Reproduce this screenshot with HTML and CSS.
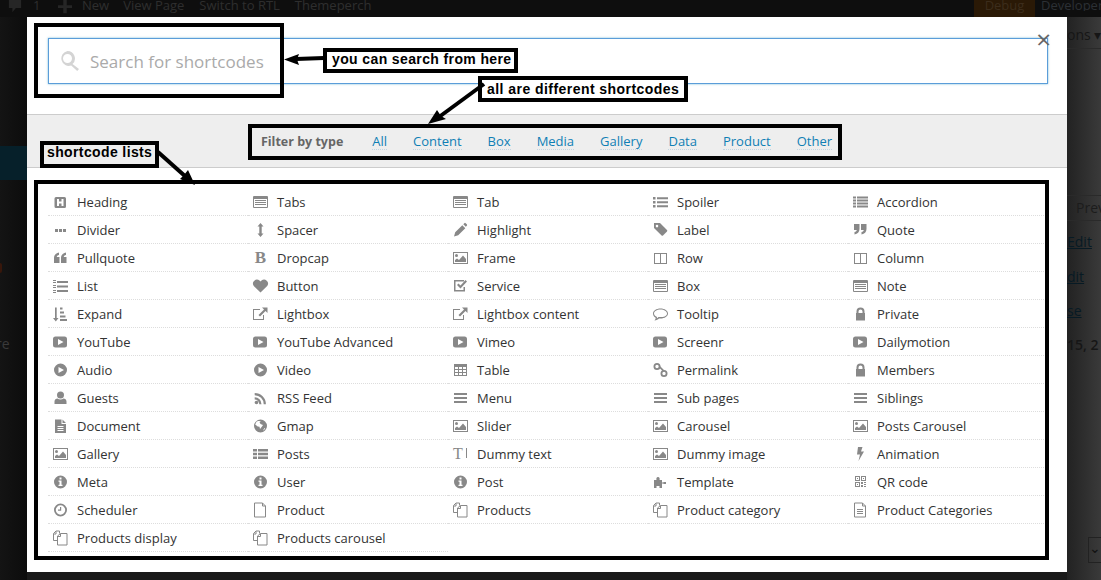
FILE: index.html
```html
<!DOCTYPE html>
<html lang="en">
<head>
<meta charset="utf-8">
<title>Shortcodes</title>
<link rel="stylesheet" href="styles.css">
</head>
<body>
<svg class="defs" width="0" height="0" aria-hidden="true">
  <symbol id="i-heading" viewBox="0 0 15 15"><path fill-rule="evenodd" d="M3 3h8.500A1.500 1.500 0 0113 4.500v8a1.500 1.500 0 01-1.500 1.500H3a1.500 1.500 0 01-1.500-1.500v-8A1.500 1.500 0 013 3zM4 5v7h2V9.500h2.500V12h2V5h-2v2.500H6V5z"/></symbol>
  <symbol id="i-listalt" viewBox="0 0 15 15"><path fill-rule="evenodd" d="M1 2h13a1 1 0 011 1v10a1 1 0 01-1 1H1a1 1 0 01-1-1V3a1 1 0 011-1zM1 5v8h13V5z"/><path d="M2 6h11v1H2zM2 8h11v1H2zM2 10h11v1H2z"/></symbol>
  <symbol id="i-listul" viewBox="0 0 15 15"><path d="M0 3h2.500v2.500H0zM0 7h2.500v2.500H0zM0 11h2.500v2.500H0zM4 3.300h11v2H4zM4 7.300h11v2H4zM4 11.300h11v2H4z"/></symbol>
  <symbol id="i-lines" viewBox="0 0 15 15"><path d="M0 2.500h3v2H0zM0 5.500h3v2H0zM0 8.500h3v2H0zM0 11.500h3v2H0zM4 2.500h11v2H4zM4 5.500h11v2H4zM4 8.500h11v2H4zM4 11.500h11v2H4z"/></symbol>
  <symbol id="i-dots" viewBox="0 0 15 15"><path d="M2 7h3v3H2zM6 7h3v3H6zM10 7h3v3h-3z"/></symbol>
  <symbol id="i-arrowsv" viewBox="0 0 15 15"><path d="M7.500 1l3 3.500H8.700v7h1.800l-3 3.500-3-3.500h1.800v-7H4.500z"/></symbol>
  <symbol id="i-pencil" viewBox="0 0 15 15"><path d="M1 14.500l1.200-4.200 7.100-7.100 3 3-7.100 7.100zM10.300 2.200l1-1a1 1 0 011.400 0l1.100 1.100a1 1 0 010 1.400l-1 1z"/></symbol>
  <symbol id="i-tag" viewBox="0 0 15 15"><path fill-rule="evenodd" d="M1 1h6l7 7a1 1 0 010 1.400L10 13.500a1 1 0 01-1.400 0L1 6zM4 2.800a1.300 1.300 0 100 2.600 1.300 1.300 0 000-2.600z"/></symbol>
  <symbol id="i-quoteleft" viewBox="0 0 15 15"><path d="M1 8c0-3 2-5 5-5.500V5C4.500 5.300 3.800 6 3.800 7h2.700v6H1zM8 8c0-3 2-5 5-5.500V5c-1.500.3-2.200 1-2.200 2h2.700v6H8z"/></symbol>
  <symbol id="i-quoteright" viewBox="0 0 15 15"><path d="M6.500 7c0 3-2 5-5 5.500V10c1.500-.3 2.200-1 2.200-2H1V2h5.500zM13.500 7c0 3-2 5-5 5.500V10c1.500-.3 2.200-1 2.200-2H8V2h5.500z"/></symbol>
  <symbol id="i-picture" viewBox="0 0 15 15"><path fill-rule="evenodd" d="M0 2h15v12H0zM1 3v10h13V3z"/><circle cx="3.500" cy="5.500" r="1.500"/><path d="M2 12v-2l2-1.500L6 10l4-4.500 3 3.500v3z"/></symbol>
  <symbol id="i-columns" viewBox="0 0 15 15"><path fill-rule="evenodd" d="M1 3h13v11H1zM2 4v9h5V4zM8 4v9h5V4z"/></symbol>
  <symbol id="i-listol" viewBox="0 0 15 15"><path d="M0 2h3v1H0zM0 4h3v1H0zM0 7h3v1H0zM0 9h3v1H0zM0 12h3v1H0zM0 14h3v1H0zM4 3h11v2H4zM4 7.500h11v2H4zM4 12h11v2H4z"/></symbol>
  <symbol id="i-heart" viewBox="0 0 15 15"><path d="M7.500 14.500L.8 8A4 4 0 016.500 2.500l1 1 1-1A4 4 0 0114.200 8z"/></symbol>
  <symbol id="i-check" viewBox="0 0 15 15"><path fill-rule="evenodd" d="M1 2h10v1.500H2.500V12h8V9H12v4.500H1z"/><path d="M5.500 5.500l2 2 5-5.500 1.500 1.500-6.500 7L4 7z"/></symbol>
  <symbol id="i-sort" viewBox="0 0 15 15"><path d="M2 1.500h1.700V12H5.500l-2.700 3.500L0 12h2zM7 1.500h2.500v2H7zM7 5.500h4v2H7zM7 9.500h5.500v2H7zM7 13h7v2H7z"/></symbol>
  <symbol id="i-external" viewBox="0 0 15 15"><path fill-rule="evenodd" d="M0 3h7v1H1v9h9V9h1v5H0z"/><path d="M9 1.500h5.500V7l-2-2L7 10.500 5.500 9 11 3.500z"/></symbol>
  <symbol id="i-comment" viewBox="0 0 15 15"><path fill-rule="evenodd" d="M7.500 2.500c4.100 0 7.500 2.200 7.500 5s-3.400 5-7.500 5H6C5 13.500 3.500 14.200 1.500 14.500c.7-.8 1.200-1.500 1.200-2.700C1 10.900 0 9.300 0 7.500c0-2.800 3.400-5 7.500-5zM7.500 3.500C3.900 3.500 1 5.300 1 7.500c0 1.500 1.200 2.800 3 3.500 0 .5-.1 1-.3 1.400.7-.3 1.400-.7 1.800-1.400h2C11.100 11.500 14 9.800 14 7.500s-2.900-4-6.500-4z"/></symbol>
  <symbol id="i-lock" viewBox="0 0 15 15"><path fill-rule="evenodd" d="M3.500 7V5.500a4 4 0 018 0V7h.5v7.500H3V7zM5.500 7h4V5.500a2 2 0 00-4 0z"/></symbol>
  <symbol id="i-youtube" viewBox="0 0 15 15"><path fill-rule="evenodd" d="M2.500 2.500h9A2.500 2.500 0 0114 5v6a2.500 2.500 0 01-2.500 2.500h-9A2.500 2.500 0 010 11V5a2.500 2.500 0 012.500-2.500zM5 5v6l5.500-3z"/></symbol>
  <symbol id="i-playc" viewBox="0 0 15 15"><path fill-rule="evenodd" d="M7.500 1.500a6.500 6.500 0 110 13 6.500 6.500 0 010-13zM5.500 5v6l5.500-3z"/></symbol>
  <symbol id="i-table" viewBox="0 0 15 15"><path fill-rule="evenodd" d="M1 2h13v12H1zM2 5v2h3V5zM6 5v2h3V5zM10 5v2h3V5zM2 8v2h3V8zM6 8v2h3V8zM10 8v2h3V8zM2 11v2h3v-2zM6 11v2h3v-2zM10 11v2h3v-2z"/></symbol>
  <symbol id="i-link" viewBox="0 0 15 15"><path fill-rule="evenodd" d="M4 1a3.500 3.500 0 110 7 3.500 3.500 0 010-7zM4 2.800a1.700 1.700 0 100 3.400 1.700 1.700 0 000-3.400zM11 8a3.500 3.500 0 110 7 3.500 3.500 0 010-7zM11 9.800a1.700 1.700 0 100 3.400 1.700 1.700 0 000-3.400z"/><path d="M6 5.500l1.200-1.200 4 4-1.200 1.200z"/></symbol>
  <symbol id="i-user" viewBox="0 0 15 15"><circle cx="7.500" cy="5" r="3.500"/><path d="M1.500 14v-2.500c0-2 1.500-3 3-3 .8.700 1.800 1 3 1s2.200-.3 3-1c1.500 0 3 1 3 3V14z"/></symbol>
  <symbol id="i-rss" viewBox="0 0 15 15"><circle cx="3.500" cy="12.500" r="1.800"/><path d="M1.700 7.300v2.200a4.700 4.700 0 014.600 4.700h2.200a6.900 6.900 0 00-6.800-6.900zM1.700 3v2.200a9 9 0 019 9h2.200A11.200 11.200 0 001.700 3z"/></symbol>
  <symbol id="i-bars" viewBox="0 0 15 15"><path d="M1 3h13v2H1zM1 7h13v2H1zM1 11h13v2H1z"/></symbol>
  <symbol id="i-filetext" viewBox="0 0 15 15"><path fill-rule="evenodd" d="M2 1.500h6.500V6H13v9H2zM9.500 1.500L13 5H9.500zM4.500 8v1h6V8zM4.500 10v1h6v-1zM4.500 12v1h6v-1z"/></symbol>
  <symbol id="i-globe" viewBox="0 0 15 15"><path fill-rule="evenodd" d="M7.500 1.500a6.500 6.500 0 110 13 6.500 6.500 0 010-13zM3.500 3.800L2.200 6.500l2.500 2 1.800.2.500 2.300 2-2.500L10 7 7.500 6l-1-2L8 3H5zM11.500 10L10 12.500l1-.5 1.200-1.500z"/></symbol>
  <symbol id="i-thlist" viewBox="0 0 15 15"><path d="M0 3h4v2.500H0zM5 3h10v2.500H5zM0 6.800h4v2.500H0zM5 6.800h10v2.500H5zM0 10.600h4v2.500H0zM5 10.600h10v2.500H5z"/></symbol>
  <symbol id="i-bolt" viewBox="0 0 15 15"><path d="M5 1h4.500L8 5.500h3L5.500 15 7 8.500H4z"/></symbol>
  <symbol id="i-info" viewBox="0 0 15 15"><path fill-rule="evenodd" d="M7.500 1.500a6.500 6.500 0 110 13 6.500 6.500 0 010-13zM6.500 3.500v2h2v-2zM5.500 6.500v1.200h1v3.100h-1V12h4v-1.200h-1V6.500z"/></symbol>
  <symbol id="i-puzzle" viewBox="0 0 15 15"><path d="M1 6h2.500C3 4.500 3.500 3 5 3s2 1.500 1.500 3H9v2.500h1.500V8H13v2h-2.500v-.5H9V14H6.500v-2h-3v2H1z"/></symbol>
  <symbol id="i-qr" viewBox="0 0 15 15"><path fill-rule="evenodd" d="M2 2h5v5H2zM3 3v3h3V3zM8 2h5v5H8zM9 3v3h3V3zM2 8h5v5H2zM3 9v3h3V9z"/><path d="M4 4h1v1H4zM10 4h1v1h-1zM4 10h1v1H4zM8 8h2v2H8zM11 8h2v1h-2zM11 10h2v1h-2zM8 11h2v2H8zM11 12h2v1h-2z"/></symbol>
  <symbol id="i-clock" viewBox="0 0 15 15"><path fill-rule="evenodd" d="M7.500 1.500a6.500 6.500 0 110 13 6.500 6.500 0 010-13zM7.500 3.300a4.700 4.700 0 100 9.400 4.700 4.700 0 000-9.400z"/><path d="M7 5h1.200v3.700H5V7.600h2z"/></symbol>
  <symbol id="i-file" viewBox="0 0 15 15"><path fill="none" stroke="currentColor" d="M1.500 1h8l3 3v11h-11zM9.500 1v3h3"/></symbol>
  <symbol id="i-files" viewBox="0 0 15 15"><path fill="none" stroke="currentColor" d="M.5 3.500L3 1h3.500v2.500M.5 3.500V10.500H4.500M.5 4H3V1.300M4.500 6L7.500 3.500h6.500V15H4.500zM4.800 6.500H7.500V3.800"/></symbol>
  <symbol id="i-filetexto" viewBox="0 0 15 15"><path fill="none" stroke="currentColor" d="M1.500 1h8l3 3v11h-11zM9.500 1v3h3M4 7.500h6M4 9.500h6M4 11.500h6"/></symbol>
  <symbol id="i-search" viewBox="0 0 20 20"><path fill-rule="evenodd" d="M7.500 0a7.500 7.500 0 015 13l6.500 5-1.800 2-6-5.500A7.500 7.500 0 117.500 0zM7.500 3a4.500 4.500 0 100 9 4.500 4.500 0 000-9z"/></symbol>
</svg>

<header class="adminbar">
  <svg class="bar-icon" viewBox="0 0 16 16"><path d="M1 0h14v9H9l-4 5V9H1z"/></svg>
  <span class="bar-count">1</span>
  <svg class="bar-icon" viewBox="0 0 16 16"><path d="M6 0h4v6h6v3h-6v6H6V9H0V6h6z"/></svg>
  <span class="bar-item bar-new">New</span>
  <span class="bar-item">View Page</span>
  <span class="bar-item">Switch to RTL</span>
  <span class="bar-item">Themeperch</span>
  <span class="bar-debug">Debug</span>
  <span class="bar-dev">Developer</span>
</header>

<div class="page">
  <aside class="sidebar">
    <div class="side-band"></div>
    <div class="side-dot"></div>
    <div class="side-text">re</div>
  </aside>
  <main class="backdrop">
    <div class="back-top">ons ▾</div>
    <div class="back-prev">Prev</div>
    <a class="back-link">Edit</a>
    <a class="back-link">dit</a>
    <a class="back-link">se</a>
    <div class="back-date">15, 2</div>
    <div class="back-select">⌄</div>
  </main>
</div>

<section class="modal">
  <div class="search-area">
    <div class="search-input">
      <svg class="search-icon"><use href="#i-search"/></svg>
      <span class="search-placeholder">Search for shortcodes</span>
    </div>
    <span class="close">×</span>
  </div>
  <nav class="filter">
    <strong class="filter-label">Filter by type</strong>
    <a class="filter-link">All</a>
    <a class="filter-link">Content</a>
    <a class="filter-link">Box</a>
    <a class="filter-link">Media</a>
    <a class="filter-link">Gallery</a>
    <a class="filter-link">Data</a>
    <a class="filter-link">Product</a>
    <a class="filter-link">Other</a>
  </nav>
  <div class="list">
    <div class="item"><svg class="ico"><use href="#i-heading"/></svg>Heading</div>
    <div class="item"><svg class="ico"><use href="#i-listalt"/></svg>Tabs</div>
    <div class="item"><svg class="ico"><use href="#i-listalt"/></svg>Tab</div>
    <div class="item"><svg class="ico"><use href="#i-listul"/></svg>Spoiler</div>
    <div class="item"><svg class="ico"><use href="#i-lines"/></svg>Accordion</div>
    <div class="item"><svg class="ico"><use href="#i-dots"/></svg>Divider</div>
    <div class="item"><svg class="ico"><use href="#i-arrowsv"/></svg>Spacer</div>
    <div class="item"><svg class="ico"><use href="#i-pencil"/></svg>Highlight</div>
    <div class="item"><svg class="ico"><use href="#i-tag"/></svg>Label</div>
    <div class="item"><svg class="ico"><use href="#i-quoteright"/></svg>Quote</div>
    <div class="item"><svg class="ico"><use href="#i-quoteleft"/></svg>Pullquote</div>
    <div class="item"><span class="ico ico-b">B</span>Dropcap</div>
    <div class="item"><svg class="ico"><use href="#i-picture"/></svg>Frame</div>
    <div class="item"><svg class="ico"><use href="#i-columns"/></svg>Row</div>
    <div class="item"><svg class="ico"><use href="#i-columns"/></svg>Column</div>
    <div class="item"><svg class="ico"><use href="#i-listol"/></svg>List</div>
    <div class="item"><svg class="ico"><use href="#i-heart"/></svg>Button</div>
    <div class="item"><svg class="ico"><use href="#i-check"/></svg>Service</div>
    <div class="item"><svg class="ico"><use href="#i-listalt"/></svg>Box</div>
    <div class="item"><svg class="ico"><use href="#i-listalt"/></svg>Note</div>
    <div class="item"><svg class="ico"><use href="#i-sort"/></svg>Expand</div>
    <div class="item"><svg class="ico"><use href="#i-external"/></svg>Lightbox</div>
    <div class="item"><svg class="ico"><use href="#i-external"/></svg>Lightbox content</div>
    <div class="item"><svg class="ico"><use href="#i-comment"/></svg>Tooltip</div>
    <div class="item"><svg class="ico"><use href="#i-lock"/></svg>Private</div>
    <div class="item"><svg class="ico"><use href="#i-youtube"/></svg>YouTube</div>
    <div class="item"><svg class="ico"><use href="#i-youtube"/></svg>YouTube Advanced</div>
    <div class="item"><svg class="ico"><use href="#i-youtube"/></svg>Vimeo</div>
    <div class="item"><svg class="ico"><use href="#i-youtube"/></svg>Screenr</div>
    <div class="item"><svg class="ico"><use href="#i-youtube"/></svg>Dailymotion</div>
    <div class="item"><svg class="ico"><use href="#i-playc"/></svg>Audio</div>
    <div class="item"><svg class="ico"><use href="#i-playc"/></svg>Video</div>
    <div class="item"><svg class="ico"><use href="#i-table"/></svg>Table</div>
    <div class="item"><svg class="ico"><use href="#i-link"/></svg>Permalink</div>
    <div class="item"><svg class="ico"><use href="#i-lock"/></svg>Members</div>
    <div class="item"><svg class="ico"><use href="#i-user"/></svg>Guests</div>
    <div class="item"><svg class="ico"><use href="#i-rss"/></svg>RSS Feed</div>
    <div class="item"><svg class="ico"><use href="#i-bars"/></svg>Menu</div>
    <div class="item"><svg class="ico"><use href="#i-bars"/></svg>Sub pages</div>
    <div class="item"><svg class="ico"><use href="#i-bars"/></svg>Siblings</div>
    <div class="item"><svg class="ico"><use href="#i-filetext"/></svg>Document</div>
    <div class="item"><svg class="ico"><use href="#i-globe"/></svg>Gmap</div>
    <div class="item"><svg class="ico"><use href="#i-picture"/></svg>Slider</div>
    <div class="item"><svg class="ico"><use href="#i-picture"/></svg>Carousel</div>
    <div class="item"><svg class="ico"><use href="#i-picture"/></svg>Posts Carousel</div>
    <div class="item"><svg class="ico"><use href="#i-picture"/></svg>Gallery</div>
    <div class="item"><svg class="ico"><use href="#i-thlist"/></svg>Posts</div>
    <div class="item"><span class="ico ico-t">T<i class="ico-t-bar"></i></span>Dummy text</div>
    <div class="item"><svg class="ico"><use href="#i-picture"/></svg>Dummy image</div>
    <div class="item"><svg class="ico"><use href="#i-bolt"/></svg>Animation</div>
    <div class="item"><svg class="ico"><use href="#i-info"/></svg>Meta</div>
    <div class="item"><svg class="ico"><use href="#i-info"/></svg>User</div>
    <div class="item"><svg class="ico"><use href="#i-info"/></svg>Post</div>
    <div class="item"><svg class="ico"><use href="#i-puzzle"/></svg>Template</div>
    <div class="item"><svg class="ico"><use href="#i-qr"/></svg>QR code</div>
    <div class="item"><svg class="ico"><use href="#i-clock"/></svg>Scheduler</div>
    <div class="item"><svg class="ico"><use href="#i-file"/></svg>Product</div>
    <div class="item"><svg class="ico"><use href="#i-files"/></svg>Products</div>
    <div class="item"><svg class="ico"><use href="#i-files"/></svg>Product category</div>
    <div class="item"><svg class="ico"><use href="#i-filetexto"/></svg>Product Categories</div>
    <div class="item"><svg class="ico"><use href="#i-files"/></svg>Products display</div>
    <div class="item"><svg class="ico"><use href="#i-files"/></svg>Products carousel</div>
  </div>
</section>

<div class="mark mark-search"></div>
<div class="mark mark-filter"></div>
<div class="mark mark-list"></div>
<div class="note note-search">you can search from here</div>
<div class="note note-filter">all are different shortcodes</div>
<div class="note note-list">shortcode lists</div>
<svg class="arrows" viewBox="0 0 1101 580">
  <path class="arrow-line" d="M324 58L296 59"/>
  <path class="arrow-head" d="M284 59.500L299 54L297 59.500L299 65z"/>
  <path class="arrow-line" d="M484 84L439 117"/>
  <path class="arrow-head" d="M428 124L437 110L441 116L446 119z"/>
  <path class="arrow-line" d="M158 152L186 177"/>
  <path class="arrow-head" d="M195 185L180 179L184 175L188 170z"/>
</svg>
</body>
</html>
```
FILE: styles.css
```css
* { box-sizing: border-box; }
html, body { margin: 0; padding: 0; }
body {
  width: 1101px;
  height: 580px;
  overflow: hidden;
  position: relative;
  background: #1a1a1a;
  font-family: "Open Sans", "Liberation Sans", sans-serif;
}
.defs { position: absolute; }
symbol { overflow: visible; }

.adminbar {
  height: 17px;
  display: flex;
  align-items: flex-start;
  background: #0e0e0e;
  color: #2e2e2e;
  font-size: 13px;
  line-height: 11px;
  padding-left: 8px;
  overflow: hidden;
}
.bar-icon { width: 14px; height: 14px; fill: #262626; flex: none; }
.bar-count { margin-left: 11px; width: 25px; }
.bar-item { margin-left: 15px; white-space: nowrap; }
.bar-new { margin-left: 10px; margin-right: -1px; }
.bar-debug {
  margin-left: auto;
  width: 61px;
  height: 17px;
  text-align: center;
  background: #2a1906;
  color: #3c2d1c;
}
.bar-dev { width: 60px; margin-left: 6px; color: #2c3035; white-space: nowrap; overflow: hidden; }

.page { display: flex; height: 563px; }
.sidebar {
  width: 27px;
  flex: none;
  display: flex;
  flex-direction: column;
  background: linear-gradient(90deg, #141414, #0c0c0c);
}
.side-band { height: 34px; margin-top: 129px; background: #06202a; }
.side-dot { width: 2px; height: 10px; margin-top: 83px; background: #38170b; border-radius: 0 5px 5px 0; }
.side-text { margin-top: 63px; margin-left: -4px; color: #3a3a3a; font-size: 14px; line-height: 16px; }

.backdrop {
  margin-left: auto;
  width: 34px;
  height: 563px;
  flex: none;
  display: flex;
  flex-direction: column;
  overflow: hidden;
  background: linear-gradient(90deg, #222, #3a3a3a);
  color: #111;
  font-size: 14px;
  white-space: nowrap;
}
.back-top {
  height: 32px;
  flex: none;
  padding-top: 8px;
  line-height: 20px;
  color: #161616;
  border-bottom: 1px solid #2a2a2a;
}
.back-prev {
  height: 26px;
  flex: none;
  margin-top: 146px;
  padding-left: 9px;
  line-height: 24px;
  color: #1c1c1c;
  border-bottom: 1px solid #2a2a2a;
  border-top: 1px solid #2a2a2a;
}
.back-link { flex: none; height: 34.500px; line-height: 20px; color: #071a24; text-decoration: underline; padding-top: 11px; }
.back-date { flex: none; height: 20px; line-height: 20px; margin-top: 10px; color: #161616; font-weight: 600; }
.back-select {
  flex: none;
  width: 14px;
  height: 26px;
  margin-top: 182px;
  margin-left: 21px;
  border: 1px solid #222;
  line-height: 20px;
  text-align: center;
  color: #111;
}

.modal {
  position: absolute;
  top: 17px;
  left: 27px;
  width: 1040px;
  height: 555px;
  background: #fff;
  display: flex;
  flex-direction: column;
}
.search-area {
  position: relative;
  height: 97px;
  flex: none;
  padding: 21px 19px 0 21px;
}
.search-input {
  height: 46px;
  display: flex;
  align-items: center;
  border: 1px solid #5b9dd9;
  box-shadow: 0 0 2px rgba(30, 140, 190, .6);
  padding-left: 11px;
}
.search-icon { width: 20px; height: 20px; fill: #d4d4d4; flex: none; }
.search-placeholder { margin-left: 10px; color: #aaa; font-size: 17px; }
.close {
  position: absolute;
  top: 9px;
  right: 16px;
  font-size: 26px;
  line-height: 26px;
  color: #666;
}
.filter {
  height: 54px;
  flex: none;
  display: flex;
  align-items: center;
  justify-content: center;
  gap: 26px;
  padding: 0 1px 0 0;
  background: #eee;
  border-top: 1px solid #ccc;
  border-bottom: 1px solid #ccc;
  font-size: 13px;
}
.filter-label { color: #666; font-weight: 700; font-size: 12.500px; margin-right: 3px; }
.filter-link { color: #0f7fb5; border-bottom: 1px dotted #c3d6e2; line-height: 16px; }

.list {
  display: grid;
  grid-template-columns: repeat(5, 200px);
  grid-auto-rows: 28px;
  padding: 20px 0 0 21px;
}
.item {
  display: flex;
  align-items: center;
  height: 28px;
  border-bottom: 1px dotted #ddd;
  color: #333;
  font-size: 13px;
  white-space: nowrap;
}
.ico {
  width: 15px;
  height: 15px;
  margin: 0 9px 0 5px;
  flex: none;
  fill: #888;
  color: #888;
  overflow: visible;
}
.ico-b {
  font-family: "Liberation Serif", serif;
  font-weight: 700;
  font-size: 17px;
  line-height: 15px;
  text-align: center;
}
.ico-t {
  position: relative;
  font-family: "Liberation Serif", serif;
  font-size: 16px;
  line-height: 15px;
}
.ico-t-bar {
  position: absolute;
  right: 1px;
  top: 2px;
  width: 1px;
  height: 10px;
  background: #888;
}

.mark, .note { position: absolute; }
.mark { border: 4px solid #000; }
.mark-search { left: 34px; top: 23px; width: 250px; height: 75px; }
.mark-filter { left: 248px; top: 124px; width: 594px; height: 36px; }
.mark-list { left: 34px; top: 180px; width: 1015px; height: 380px; }
.note {
  border: 4px solid #000;
  font-family: "Liberation Sans", Arial, sans-serif;
  font-weight: 700;
  font-size: 14px;
  letter-spacing: .38px;
  color: #000;
  white-space: nowrap;
  line-height: 14px;
}
.note-search { left: 323px; top: 48px; width: 195px; height: 25px; padding: 0 0 0 5px; background: #fff; }
.note-filter { left: 478px; top: 76px; width: 210px; height: 26px; padding: 2px 0 0 5px; background: #fff; letter-spacing: .45px; }
.note-list { left: 40px; top: 141px; width: 119px; height: 27px; padding: 0 0 0 3px; background: #eee; }

.arrows { position: absolute; left: 0; top: 0; width: 1101px; height: 580px; pointer-events: none; }
.arrow-line { fill: none; stroke: #000; stroke-width: 4; }
.arrow-head { fill: #000; }
```
